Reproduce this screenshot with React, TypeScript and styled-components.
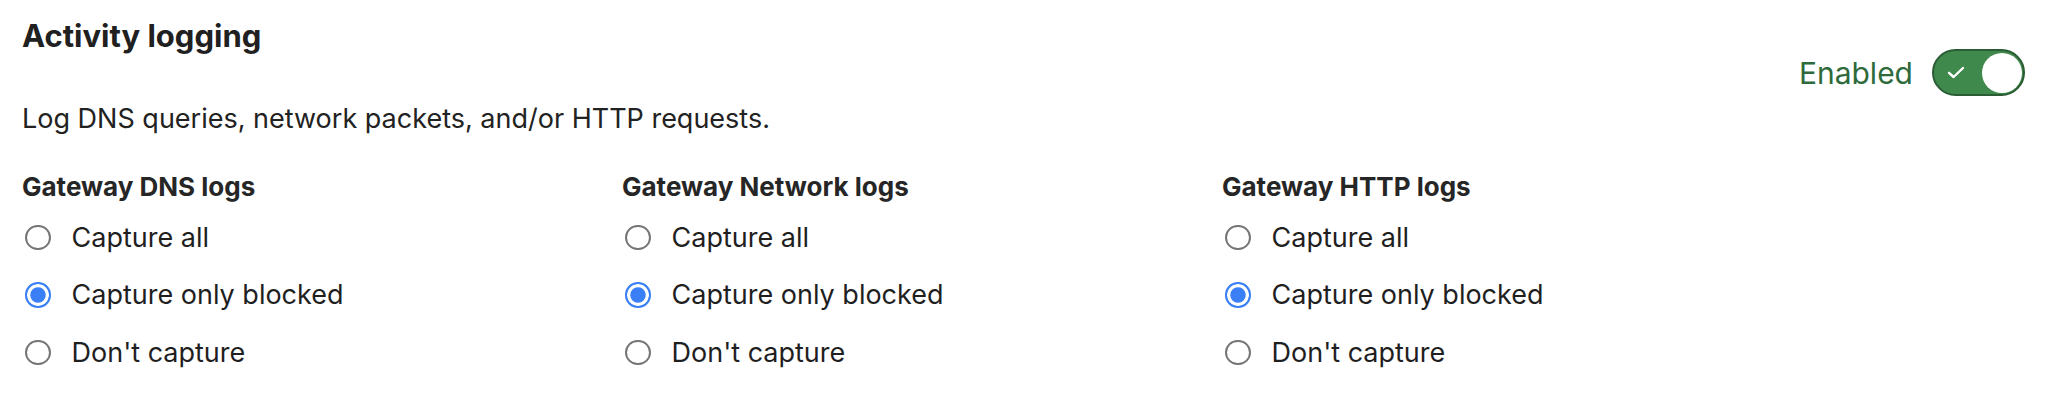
import React from "react";
import styled, { createGlobalStyle } from "styled-components";

const GlobalStyle = createGlobalStyle`
  body {
    margin: 0;
    background: #ffffff;
    color: #222222;
    font-family: Inter, "Liberation Sans", sans-serif;
  }
`;

const Page = styled.div`
  width: 2060px;
  padding: 16px 35px 0 22px;
  box-sizing: border-box;
`;

const Header = styled.header`
  display: flex;
  justify-content: space-between;
  align-items: flex-start;
`;

const Title = styled.h2`
  margin: 0;
  font-size: 31px;
  font-weight: 700;
  line-height: 40px;
  color: #202020;
`;

const Description = styled.p`
  margin: 45px 0 0;
  font-size: 27px;
  line-height: 36px;
`;

const ToggleGroup = styled.label`
  display: flex;
  align-items: center;
  gap: 19px;
  margin-top: 33px;
  color: #2e6a3b;
  font-size: 30px;
`;

const Track = styled.span`
  width: 93px;
  height: 47px;
  box-sizing: border-box;
  border: 2px solid #2b5d35;
  border-radius: 24px;
  background: #40894d;
  display: flex;
  align-items: center;
  justify-content: space-between;
  padding: 0 1px 0 13px;
`;

const Knob = styled.span`
  width: 40px;
  height: 40px;
  border-radius: 50%;
  background: #ffffff;
`;

const Columns = styled.div`
  display: grid;
  grid-template-columns: repeat(3, 600px);
  margin-top: 34px;
`;

const Group = styled.div`
  display: flex;
  flex-direction: column;
`;

const GroupTitle = styled.h3`
  margin: 0;
  font-size: 26px;
  font-weight: 700;
  line-height: 32px;
  color: #262626;
`;

const OptionList = styled.div`
  display: flex;
  flex-direction: column;
  gap: 21.5px;
  margin-top: 16.5px;
`;

const Option = styled.label`
  display: flex;
  align-items: center;
  gap: 21px;
  font-size: 27px;
  line-height: 36px;
  padding-left: 3px;
  color: #1f1f1f;
`;

const Radio = styled.span<{ $checked?: boolean }>`
  width: 25.5px;
  height: 25.5px;
  box-sizing: border-box;
  border-radius: 50%;
  border: ${(p) => (p.$checked ? "2.5px solid #3a7ff6" : "2px solid #767676")};
  background: ${(p) => (p.$checked ? "#3a7ff6" : "#ffffff")};
  box-shadow: ${(p) => (p.$checked ? "inset 0 0 0 3.3px #ffffff" : "none")};
  flex-shrink: 0;
`;

const Check = () => (
  <svg width="18" height="13" viewBox="0 0 18 13" fill="none">
    <path
      d="M2 6.8 L6.6 11 L16 2"
      stroke="#ffffff"
      strokeWidth="2.4"
      strokeLinecap="round"
      strokeLinejoin="round"
    />
  </svg>
);

const groups = ["Gateway DNS logs", "Gateway Network logs", "Gateway HTTP logs"];
const options = ["Capture all", "Capture only blocked", "Don't capture"];

export default function App() {
  return (
    <>
      <GlobalStyle />
      <Page>
        <Header>
          <div>
            <Title>Activity logging</Title>
            <Description>Log DNS queries, network packets, and/or HTTP requests.</Description>
          </div>
          <ToggleGroup>
            Enabled
            <Track>
              <Check />
              <Knob />
            </Track>
          </ToggleGroup>
        </Header>
        <Columns>
          {groups.map((g) => (
            <Group key={g}>
              <GroupTitle>{g}</GroupTitle>
              <OptionList>
                {options.map((o, i) => (
                  <Option key={o}>
                    <Radio $checked={i === 1} />
                    {o}
                  </Option>
                ))}
              </OptionList>
            </Group>
          ))}
        </Columns>
      </Page>
    </>
  );
}
